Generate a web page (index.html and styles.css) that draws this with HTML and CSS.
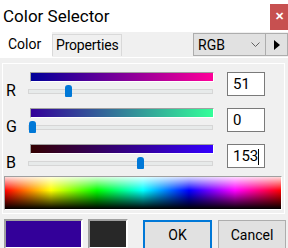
FILE: index.html
```html
<!DOCTYPE html>
<html lang="en">
<head>
  <meta charset="UTF-8">
  <title>Color Selector</title>
  <link rel="stylesheet" href="styles.css">
</head>
<body>

  <div class="titlebar">
    <span class="title">Color Selector</span>
    <button class="close">&#x2715;</button>
  </div>

  <div class="tabbar">
    <div class="tab active">Color</div>
    <div class="tab">Properties</div>
    <div class="spacer"></div>
    <div class="select">
      <span>RGB</span>
      <svg width="9" height="6" viewBox="0 0 9 6"><path d="M0.5 0.5 L4.5 4.5 L8.5 0.5" fill="none" stroke="#606060" stroke-width="1"/></svg>
    </div>
    <button class="next">
      <svg width="6" height="10" viewBox="0 0 6 10"><path d="M0 0 L6 5 L0 10 Z" fill="#000"/></svg>
    </button>
  </div>

  <div class="page">
    <div class="group">
      <div class="row">
        <span class="lbl">R</span>
        <div class="sliders">
          <div class="bar bar-r"></div>
          <div class="track"><span class="thumb" style="left: 36px"></span></div>
        </div>
        <div class="num">51</div>
      </div>
      <div class="row">
        <span class="lbl">G</span>
        <div class="sliders">
          <div class="bar bar-g"></div>
          <div class="track"><span class="thumb" style="left: 0px"></span></div>
        </div>
        <div class="num">0</div>
      </div>
      <div class="row">
        <span class="lbl">B</span>
        <div class="sliders">
          <div class="bar bar-b"></div>
          <div class="track"><span class="thumb" style="left: 108px"></span></div>
        </div>
        <div class="num">153<span class="caret"></span></div>
      </div>
      <div class="spectrum"></div>
    </div>
  </div>

  <div class="footer">
    <div class="swatch current"></div>
    <div class="swatch previous"></div>
    <div class="spacer"></div>
    <button class="btn default">OK</button>
    <button class="btn">Cancel</button>
  </div>

</body>
</html>
```

FILE: styles.css
```css
* {
  box-sizing: border-box;
}

body {
  margin: 0;
  width: 288px;
  height: 248px;
  overflow: hidden;
  background: #f0f0f0;
  font-family: Roboto, 'Liberation Sans', sans-serif;
  font-size: 14px;
  color: #000;
}

button {
  font-family: inherit;
  font-size: 14px;
  padding: 0;
  cursor: pointer;
}

/* title bar */

.titlebar {
  height: 32px;
  background: #fff;
  display: flex;
  align-items: center;
  padding-left: 3px;
}

.title {
  font-size: 17px;
  flex: 1;
  margin-top: -1px;
}

.close {
  width: 18px;
  height: 26px;
  margin-top: 1px;
  background: #c75050;
  color: #fff;
  border: none;
  font-size: 11px;
  font-weight: bold;
}

/* tabs */

.tabbar {
  display: flex;
  align-items: flex-start;
  height: 25px;
}

.tab {
  height: 22px;
  margin-top: 2px;
  padding: 1px 3px 0;
  border: 1px solid #d9d9d9;
  border-bottom: none;
  line-height: 19px;
  letter-spacing: -0.2px;
}

.tab.active {
  height: 25px;
  margin-top: 0;
  width: 52px;
  padding: 3px 8px 0;
  background: #fff;
  border: none;
  letter-spacing: 0;
}

.spacer {
  flex: 1;
}

.select {
  width: 73px;
  height: 23px;
  margin-top: 1px;
  display: flex;
  align-items: center;
  justify-content: space-between;
  padding: 0 5px 0 4px;
  background: #e1e1e1;
  border: 1px solid #adadad;
}

.next {
  width: 22px;
  height: 23px;
  margin-top: 1px;
  background: #e1e1e1;
  border: 1px solid #adadad;
  border-left: none;
  display: flex;
  align-items: center;
  justify-content: center;
}

/* colour page */

.page {
  border-top: 1px solid #fff;
  padding: 5px 3px 0 2px;
}

.group {
  border: 1px solid #fff;
  padding: 8px 2px 3px 0;
}

.row {
  display: flex;
  height: 26px;
  margin-bottom: 10px;
}

.row:nth-child(3) {
  margin-bottom: 6px;
}

.lbl {
  width: 27px;
  padding: 12px 0 0 3px;
  font-size: 16px;
  line-height: 14px;
}

.sliders {
  width: 185px;
}

.bar {
  height: 10px;
  width: 184px;
  border-top: 1px solid #a0a0a0;
  border-left: 1px solid #a0a0a0;
  border-right: 1px solid #fff;
  border-bottom: 1px solid #fff;
}

.bar-r {
  background: linear-gradient(to right, #000099, #ff0099);
}

.bar-g {
  background: linear-gradient(to right, #330099, #33ff99);
}

.bar-b {
  background: linear-gradient(to right, #330000, #3300ff);
}

.track {
  position: relative;
  margin: 7px 0 0 -2px;
  width: 185px;
  height: 5px;
  background: #e7eaea;
  border: 1px solid #d6d6d6;
}

.thumb {
  position: absolute;
  top: -5px;
  width: 7px;
  height: 12px;
  background: #0078d7;
  border-radius: 3px 3px 1px 1px;
}

.num {
  width: 38px;
  height: 24px;
  margin-left: 12px;
  border: 1px solid #7a7a7a;
  background: #fff;
  padding: 2px 0 0 5px;
  font-size: 15px;
  display: flex;
  align-items: flex-start;
}

.caret {
  display: inline-block;
  width: 1px;
  height: 16px;
  margin-top: 2px;
  background: #000;
}

.spectrum {
  margin-left: 1px;
  width: 278px;
  height: 34px;
  border-top: 1px solid #a0a0a0;
  border-left: 1px solid #a0a0a0;
  border-right: 1px solid #fff;
  border-bottom: 1px solid #fff;
  background:
    linear-gradient(to bottom, rgba(255,255,255,0.85) 0%, rgba(255,255,255,0) 42%, rgba(0,0,0,0) 42%, #000 100%),
    linear-gradient(to right, #f00, #ff0, #0f0, #0ff, #00f, #f0f, #f00);
}

/* footer */

.footer {
  display: flex;
  align-items: flex-start;
  padding: 5px 2px 0 4px;
}

.swatch {
  height: 30px;
  border-top: 2px solid #a0a0a0;
  border-left: 2px solid #a0a0a0;
  border-right: 2px solid #fff;
  border-bottom: 2px solid #fff;
}

.current {
  width: 79px;
  background: #330099;
}

.previous {
  width: 40px;
  margin-left: 5px;
  background: #282828;
}

.btn {
  width: 68px;
  height: 30px;
  margin-top: 1px;
  background: #e1e1e1;
  border: 1px solid #adadad;
  margin-left: 6px;
}

.btn.default {
  width: 69px;
  border: 2px solid #0078d7;
}
```
